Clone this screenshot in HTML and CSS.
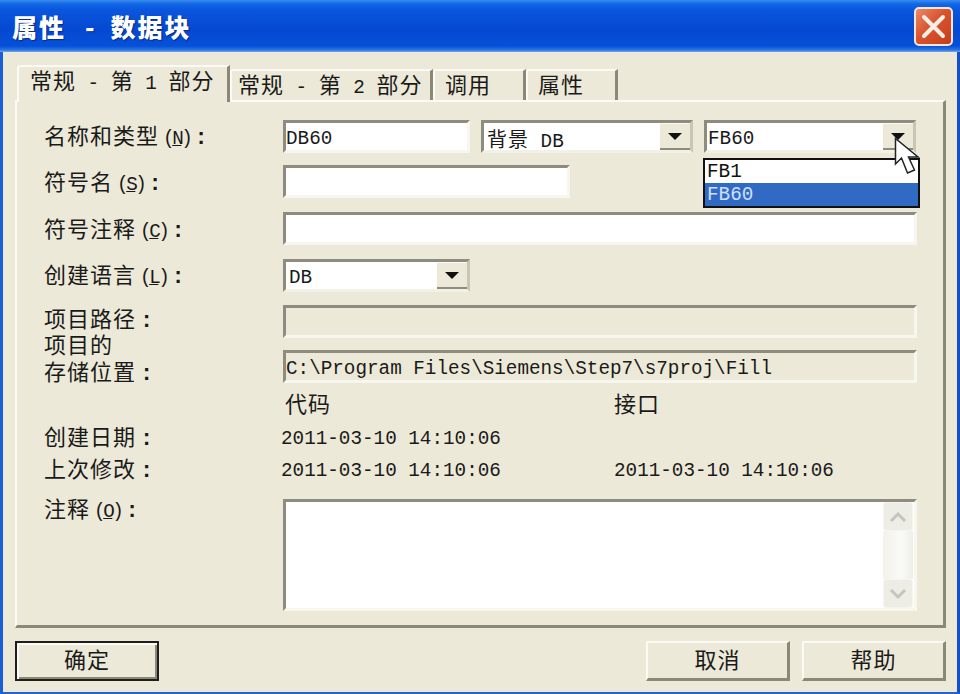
FILE: index.html
```html
<!DOCTYPE html>
<html lang="zh-CN">
<head>
<meta charset="utf-8">
<title>属性 - 数据块</title>
<link rel="stylesheet" href="styles.css">
</head>
<body>
<div class="window">
  <header class="titlebar">
    <h1 class="title">属性<span class="title-dash">-</span>数据块</h1>
    <button class="close" aria-label="关闭">
      <svg width="27" height="27" viewBox="0 0 27 27"><path d="M4 4L23 23M23 4L4 23" stroke="#fbeee8" stroke-width="4" stroke-linecap="round" fill="none"/></svg>
    </button>
  </header>
  <div class="dialog">
    <nav class="tabs">
      <div class="tab tab-active tab-w1">常规<span class="lat"> - </span>第<span class="lat"> 1 </span>部分</div>
      <div class="tab tab-w2">常规<span class="lat"> - </span>第<span class="lat"> 2 </span>部分</div>
      <div class="tab tab-w3">调用</div>
      <div class="tab tab-w4">属性</div>
    </nav>
    <section class="panel">
      <div class="form">
        <div class="label">名称和类型<span class="key">(<u>N</u>)</span><span class="colon">:</span></div>
        <div class="field-row">
          <div class="input w-name">DB60</div>
          <div class="input combo w-type"><span class="combo-text"><span class="cjk">背景</span> DB</span><span class="drop-btn"><i class="arrow"></i></span></div>
          <div class="input combo combo-fb w-type"><span class="combo-text">FB60</span><span class="drop-btn"><i class="arrow"></i></span>
            <ul class="dropdown">
              <li class="option">FB1</li>
              <li class="option option-selected">FB60</li>
            </ul>
            <svg class="cursor" width="28" height="40" viewBox="0 0 28 40"><path d="M1.5 1.5V27L7.5 21L13.5 36L20.5 33L14.5 20H24Z" fill="#fff" stroke="#222" stroke-width="1.5"/></svg>
          </div>
        </div>

        <div class="label">符号名<span class="key">(<u>S</u>)</span><span class="colon">:</span></div>
        <div class="field-row"><div class="input w-symbol"></div></div>

        <div class="label">符号注释<span class="key">(<u>C</u>)</span><span class="colon">:</span></div>
        <div class="field-row"><div class="input w-full"></div></div>

        <div class="label">创建语言<span class="key">(<u>L</u>)</span><span class="colon">:</span></div>
        <div class="field-row"><div class="input combo w-name"><span class="combo-text">DB</span><span class="drop-btn"><i class="arrow"></i></span></div></div>

        <div class="label label-path">项目路径<span class="colon">:</span></div>
        <div class="field-row"><div class="input input-disabled w-full"></div></div>

        <div class="label label-two">项目的<br>存储位置<span class="colon">:</span></div>
        <div class="field-row"><div class="input input-disabled w-full">C:\Program Files\Siemens\Step7\s7proj\Fill</div></div>
      </div>

      <div class="info">
        <div></div><div class="info-head info-head-first">代码</div><div class="info-head">接口</div>
        <div class="label">创建日期<span class="colon">:</span></div><div class="stamp">2011-03-10 14:10:06</div><div></div>
        <div class="label">上次修改<span class="colon">:</span></div><div class="stamp">2011-03-10 14:10:06</div><div class="stamp">2011-03-10 14:10:06</div>
      </div>

      <div class="comment-row">
        <div class="label label-comment">注释<span class="key">(<u>O</u>)</span><span class="colon">:</span></div>
        <div class="input textarea">
          <div class="scrollbar">
            <span class="scroll-btn"><svg width="18" height="12" viewBox="0 0 18 12"><path d="M2 10L9 3L16 10" fill="none" stroke="#c5c5bd" stroke-width="3"/></svg></span>
            <span class="scroll-track"></span>
            <span class="scroll-btn"><svg width="18" height="12" viewBox="0 0 18 12"><path d="M2 2L9 9L16 2" fill="none" stroke="#c5c5bd" stroke-width="3"/></svg></span>
          </div>
        </div>
      </div>
    </section>
    <footer class="footer">
      <button class="btn btn-default">确定</button>
      <div class="footer-right">
        <button class="btn">取消</button>
        <button class="btn">帮助</button>
      </div>
    </footer>
  </div>
</div>
</body>
</html>
```
FILE: styles.css
```css
* { box-sizing: border-box; }
html, body { margin: 0; padding: 0; }
body {
  width: 960px;
  height: 694px;
  overflow: hidden;
  font-family: "Noto Sans CJK SC", "Liberation Sans", sans-serif;
  font-size: 22px;
  color: #1a1a1a;
}
.window {
  width: 960px;
  height: 694px;
  display: flex;
  flex-direction: column;
  background: #ECE9D8;
}
.titlebar {
  height: 52px;
  flex: none;
  display: flex;
  align-items: center;
  justify-content: space-between;
  padding: 0 7px 0 12px;
  background: linear-gradient(180deg, #3a8cf0 0, #1166e6 4px, #0a56dc 10px, #0548d2 30px, #0650d8 46px, #2a76e4 50px, #7fa6e0 52px);
}
.title {
  margin: 0;
  font-size: 25px;
  font-weight: 900;
  letter-spacing: 2px;
  color: #fff;
  line-height: 1;
  text-shadow: 1px 1px 1px #0a2a80;
}
.title-dash { margin: 0 14px 0 19px; }
.close {
  width: 39px;
  height: 39px;
  padding: 0;
  display: flex;
  align-items: center;
  justify-content: center;
  border: 2px solid #f0e6e0;
  border-radius: 5px;
  background: linear-gradient(135deg, #e88a6a 0, #d9542c 45%, #c43e18 100%);
}
.dialog {
  flex: 1;
  min-height: 0;
  display: flex;
  flex-direction: column;
  padding: 13px 11px 11px 12px;
  background: #ECE9D8;
  border-left: 3px solid #1a5fd8;
  border-right: 3px solid #1450c8;
  border-bottom: 2px solid #2a62c8;
}
.tabs {
  height: 35px;
  flex: none;
  display: flex;
  align-items: flex-end;
  padding-left: 2px;
  position: relative;
  z-index: 1;
}
.tab {
  height: 31px;
  white-space: pre;
  padding-left: 6px;
  border-top: 2px solid #fbfaf5;
  border-left: 2px solid #fbfaf5;
  border-right: 3px solid #8b8878;
  border-top-left-radius: 3px;
  letter-spacing: 1px;
  line-height: 24px;
}
.tab-active {
  height: 37px;
  margin-bottom: -2px;
  padding-left: 11px;
  background: #ECE9D8;
}
.tab-w1 { width: 213px; }
.tab-w2 { width: 203px; }
.tab-w3 { width: 93px; padding-left: 10px; }
.tab-w4 { width: 92px; padding-left: 10px; }
.lat {
  font-family: "Liberation Mono", monospace;
  font-size: 19.3px;
  letter-spacing: 0;
}
.panel {
  height: 528px;
  flex: none;
  padding: 18px 26px 0 27px;
  border-top: 2px solid #fbfaf5;
  border-left: 2px solid #fbfaf5;
  border-right: 3px solid #8b8878;
  border-bottom: 3px solid #8b8878;
}
.form {
  display: grid;
  grid-template-columns: 239px 1fr;
  grid-template-rows: 33px 35px 35px 34px 33px 33px;
  row-gap: 12px;
}
.label {
  white-space: nowrap;
  letter-spacing: 1px;
  line-height: 27px;
  align-self: center;
}
.form .label { margin-bottom: 6px; transform: translateY(3px); }
.form .label-path { transform: translateY(1px); }
.form .label-two { align-self: start; margin-top: -20px; margin-bottom: 0; transform: none; }
.key {
  font-family: "Liberation Mono", monospace;
  font-size: 19.3px;
  letter-spacing: -2.4px;
  margin-left: 4px;
}
.colon {
  font-family: "Liberation Mono", monospace;
  font-size: 22px;
  font-weight: 700;
  letter-spacing: 0;
  margin-left: 4px;
}
.field-row {
  display: flex;
  gap: 11px;
  align-items: flex-start;
}
.input {
  height: 33px;
  padding: 0 1px 0 0;
  background: #fff;
  border-style: solid;
  border-width: 3px;
  border-color: #8e8c7e #f7f6ef #f7f6ef #8e8c7e;
  font-family: "Liberation Mono", monospace;
  font-size: 19.3px;
  line-height: 32px;
  color: #1a1a1a;
  white-space: nowrap;
}
.input-disabled { background: #ECE9D8; }
.w-name { width: 187px; }
.w-type { width: 212px; }
.w-symbol { width: 287px; }
.w-full { flex: 1; }
.combo {
  position: relative;
  display: flex;
  justify-content: space-between;
  padding: 0 0 0 3px;
  border-color: #8e8c7e #c9c6b4 #f2f1e8 #8e8c7e;
}
.combo-fb { padding-left: 1px; }
.cjk {
  font-family: "Noto Sans CJK SC", sans-serif;
  font-size: 20px;
  letter-spacing: 1px;
}
.combo-text { line-height: 32px; }
.drop-btn {
  width: 30px;
  height: 27px;
  flex: none;
  display: flex;
  align-items: center;
  justify-content: center;
  background: #ECE9D8;
  border-bottom: 2px solid #8e8c7e;
  border-top: 1px solid #fbfaf5;
}
.arrow {
  width: 0;
  height: 0;
  border-left: 7px solid transparent;
  border-right: 7px solid transparent;
  border-top: 7px solid #111;
}
.dropdown {
  position: absolute;
  top: 35px;
  left: -4px;
  right: -7px;
  margin: 0;
  padding: 0;
  list-style: none;
  background: #fff;
  border: 2px solid #111;
  z-index: 2;
}
.option {
  height: 23px;
  padding-left: 2px;
  line-height: 25px;
  color: #111;
}
.option-selected {
  background: #316AC5;
  color: #cfe0ff;
}
.cursor {
  position: absolute;
  left: 187px;
  top: 14px;
  z-index: 3;
}
.info {
  display: grid;
  grid-template-columns: 237px 333px 1fr;
  grid-auto-rows: 32px;
  margin-top: 6px;
  align-items: center;
}
.info-head {
  align-self: start;
  letter-spacing: 1px;
  line-height: 26px;
}
.info-head-first { padding-left: 4px; }
.stamp {
  padding-top: 4px;
  font-family: "Liberation Mono", monospace;
  font-size: 19.3px;
  white-space: nowrap;
}
.comment-row {
  display: flex;
  margin-top: 14px;
}
.label-comment {
  width: 239px;
  flex: none;
  align-self: flex-start;
  margin-top: -5px;
}
.textarea {
  flex: 1;
  height: 112px;
  position: relative;
  display: flex;
  justify-content: flex-end;
  padding: 0;
}
.scrollbar {
  width: 30px;
  margin-right: 1px;
  display: flex;
  flex-direction: column;
}
.scroll-btn {
  height: 29px;
  flex: none;
  display: flex;
  align-items: center;
  justify-content: center;
  background: #EDEDE6;
  border: 1px solid #f5f5f0;
  border-radius: 3px;
}
.scroll-track {
  flex: 1;
  background: linear-gradient(90deg, #f2f1ea, #fafaf7 60%, #eeeee8);
}
.footer {
  margin-top: 13px;
  display: flex;
  justify-content: space-between;
}
.footer-right {
  display: flex;
  gap: 12px;
}
.btn {
  width: 144px;
  height: 40px;
  padding: 0 0 6px;
  font-family: "Noto Sans CJK SC", sans-serif;
  font-size: 22px;
  letter-spacing: 1px;
  line-height: 1;
  color: #1a1a1a;
  background: #ECE9D8;
  border-style: solid;
  border-width: 2px 3px 3px 2px;
  border-color: #fbfaf5 #8b8878 #8b8878 #fbfaf5;
}
.btn-default {
  border-color: #1e1e1e;
  border-width: 2px;
  box-shadow: inset 2px 2px 0 #fbfaf5, inset -2px -2px 0 #8b8878;
}
```
